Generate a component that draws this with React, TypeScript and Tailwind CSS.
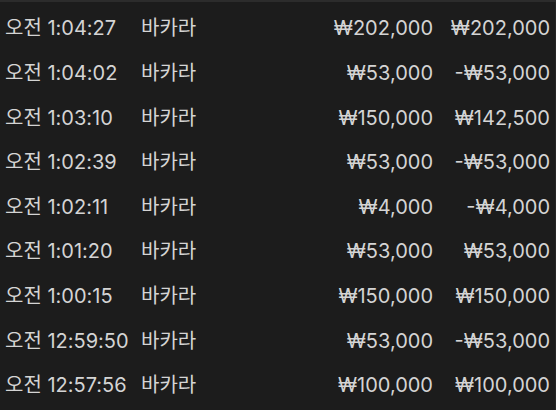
import React from "react";

interface Row {
  time: string;
  game: string;
  bet: string;
  result: string;
}

const ROWS: Row[] = [
  { time: "오전 1:04:27", game: "바카라", bet: "₩202,000", result: "₩202,000" },
  { time: "오전 1:04:02", game: "바카라", bet: "₩53,000", result: "-₩53,000" },
  { time: "오전 1:03:10", game: "바카라", bet: "₩150,000", result: "₩142,500" },
  { time: "오전 1:02:39", game: "바카라", bet: "₩53,000", result: "-₩53,000" },
  { time: "오전 1:02:11", game: "바카라", bet: "₩4,000", result: "-₩4,000" },
  { time: "오전 1:01:20", game: "바카라", bet: "₩53,000", result: "₩53,000" },
  { time: "오전 1:00:15", game: "바카라", bet: "₩150,000", result: "₩150,000" },
  { time: "오전 12:59:50", game: "바카라", bet: "₩53,000", result: "-₩53,000" },
  { time: "오전 12:57:56", game: "바카라", bet: "₩100,000", result: "₩100,000" },
];

export default function App() {
  return (
    <div
      className="w-[556px] h-[410px] overflow-hidden bg-[#1c1c1c] border-t-2 border-[#2c2c2c] text-[#d4d4d4]"
      style={{ fontFamily: 'Inter, "Noto Sans CJK KR", sans-serif' }}
    >
      <div className="flex flex-col pt-[4px] pr-[5px] border-r border-[#252525] h-full">
        {ROWS.map((row, i) => (
          <div key={i} className="flex items-center h-[44.625px] text-[20px]">
            <span className="w-[141px] pl-[5px] whitespace-nowrap">{row.time}</span>
            <span className="w-[100px] whitespace-nowrap">{row.game}</span>
            <span className="flex-1 text-right whitespace-nowrap">{row.bet}</span>
            <span className="w-[117px] text-right whitespace-nowrap">{row.result}</span>
          </div>
        ))}
      </div>
    </div>
  );
}
